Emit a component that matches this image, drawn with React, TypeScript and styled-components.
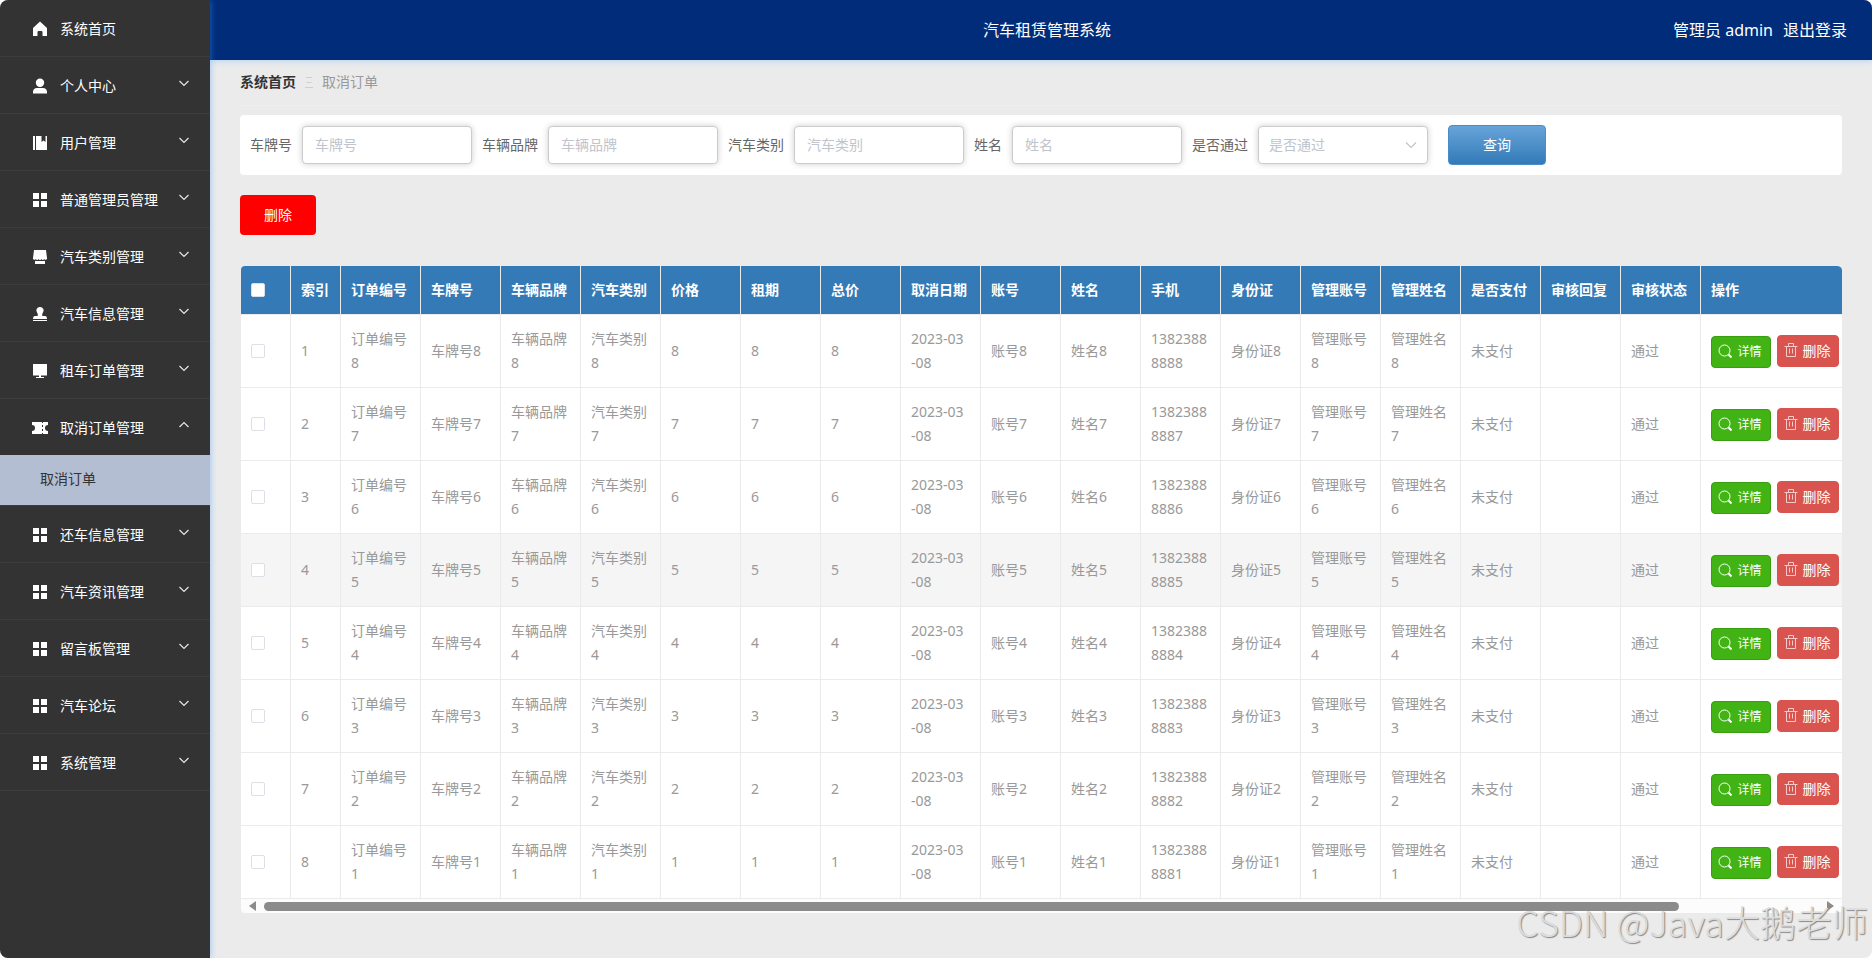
import React from 'react';
import styled, { createGlobalStyle } from 'styled-components';

const GlobalStyle = createGlobalStyle`
  * { box-sizing: border-box; }
  body {
    margin: 0;
    background: #fff;
    font-family: "Noto Sans", "Noto Sans CJK SC", sans-serif;
    font-size: 14px;
    line-height: 24px;
    color: #666;
  }
  button, input, select { font-family: inherit; }
`;

const Shell = styled.div`
  position: relative;
  display: flex;
  min-height: 100vh;
  background: #ebebeb;
  border-radius: 8px;
  overflow: hidden;
`;

const Sidebar = styled.nav`
  position: relative;
  z-index: 1;
  flex: 0 0 210px;
  background: #333;
  box-shadow: 1px 0 6px rgba(64, 158, 255, 0.4);
`;

const Menu = styled.ul`
  margin: 0;
  padding: 0;
  list-style: none;
`;

const MenuItem = styled.li`
  border-bottom: 1px solid #3c3c3c;
`;

const MenuButton = styled.button`
  display: flex;
  align-items: center;
  gap: 10px;
  width: 100%;
  height: 56px;
  padding: 2px 20px 0 30px;
  border: 0;
  background: none;
  color: #fff;
  font-size: 14px;
  text-align: left;
`;

const MenuText = styled.span`
  flex: 1;
  padding-bottom: 2px;
  white-space: nowrap;
`;

const MenuIcon = styled.svg`
  width: 20px;
  height: 20px;
  fill: #fff;
`;

const Chevron = styled.svg<{ $color: string }>`
  width: 12px;
  height: 12px;
  fill: none;
  stroke: ${(p) => p.$color};
  stroke-width: 1.2;
`;

const MenuChevron = styled(Chevron)`
  margin-bottom: 6px;
`;

const SubLink = styled.a`
  display: block;
  height: 50px;
  padding-left: 40px;
  background: #b3bed3;
  color: #333;
  line-height: 48px;
  text-decoration: none;
`;

const Main = styled.div`
  flex: 1;
  min-width: 0;
`;

const Header = styled.header`
  display: grid;
  grid-template-columns: 1fr auto 1fr;
  align-items: center;
  height: 60px;
  padding: 0 25px 0 37px;
  background: #002c7a;
  box-shadow: 0 1px 6px rgba(64, 158, 255, 0.3);
  color: #fff;
  font-size: 16px;
`;

const Title = styled.h1`
  grid-column: 2;
  margin: 0;
  font-size: 16px;
  font-weight: 400;
`;

const Account = styled.div`
  display: flex;
  justify-content: flex-end;
  gap: 10px;
`;

const LogoutLink = styled.a`
  color: #fff;
  text-decoration: none;
`;

const Content = styled.main`
  padding: 0 30px;
`;

const Breadcrumb = styled.div`
  display: flex;
  align-items: center;
  gap: 9px;
  height: 46px;
  margin-bottom: 9px;
  padding-bottom: 2px;
  border-bottom: 1px solid #eee;
  color: #999;
`;

const HomeLink = styled.a`
  color: #333;
  font-weight: 700;
  text-decoration: none;
`;

const Separator = styled.svg`
  width: 8px;
  height: 12px;
  stroke: #ccced4;
`;

const SearchBar = styled.form`
  display: flex;
  align-items: center;
  gap: 10px;
  height: 60px;
  padding: 0 10px;
  border-radius: 4px;
  background: #fff;
`;

const SearchLabel = styled.label`
  white-space: nowrap;
`;

const TextField = styled.input`
  width: 170px;
  height: 38px;
  padding: 0 12px 2px;
  border: 1px solid #ccc;
  border-radius: 4px;
  background: #fff;
  box-shadow: 0 0 6px rgba(0, 0, 0, 0.2);
  font-size: 14px;
  &::placeholder { color: #c0c4cc; }
`;

const SelectWrap = styled.div`
  display: grid;
  grid-template-columns: 1fr 12px;
  align-items: center;
  width: 170px;
  height: 38px;
  padding: 0 10px;
  border: 1px solid #ccc;
  border-radius: 4px;
  background: #fff;
  box-shadow: 0 0 6px rgba(0, 0, 0, 0.2);
`;

const SelectField = styled.select`
  appearance: none;
  grid-column: 1;
  height: 36px;
  padding: 0 0 2px;
  border: 0;
  background: none;
  color: #c0c4cc;
  font-size: 14px;
`;

const QueryButton = styled.button`
  width: 98px;
  height: 40px;
  margin-left: 10px;
  padding: 0 0 2px;
  border: 1px solid #4a8cc9;
  border-radius: 4px;
  background: linear-gradient(#67a4da, #337ab7);
  color: #fff;
  font-size: 14px;
`;

const BatchDelete = styled.button`
  display: block;
  width: 76px;
  height: 40px;
  margin: 20px 0 30px;
  padding: 0 0 2px;
  border: 0;
  border-radius: 4px;
  background: #f00;
  color: #fff;
  font-size: 14px;
`;

const TableBox = styled.section`
  border: solid #ebebeb;
  border-width: 1px 0 0 1px;
  border-radius: 5px;
  background: #fff;
  overflow: hidden;
`;

const TableView = styled.div`
  overflow: hidden;
`;

const Table = styled.table`
  width: 1760px;
  table-layout: fixed;
  border-collapse: separate;
  border-spacing: 0;
  color: #999;
`;

const HeadCell = styled.th`
  height: 49px;
  padding: 0 10px;
  border-right: 1px solid #ebebeb;
  border-bottom: 1px solid #ebebeb;
  background: #337ab7;
  color: #fff;
  font-weight: 700;
  text-align: left;
  white-space: nowrap;
`;

const Row = styled.tr<{ $active: boolean }>`
  background: ${(p) => (p.$active ? '#f5f5f5' : '#fff')};
`;

const Cell = styled.td`
  height: 73px;
  padding: 0 10px;
  border-right: 1px solid #ebebeb;
  border-bottom: 1px solid #ebebeb;
  word-break: break-all;
  white-space: pre-line;
`;

const Tick = styled.input`
  appearance: none;
  display: block;
  width: 14px;
  height: 14px;
  margin: 0;
  border: 1px solid #dcdfe6;
  border-radius: 2px;
  background: #fff;
`;

const Actions = styled.div`
  display: flex;
  align-items: flex-start;
  gap: 6px;
`;

const ActionButton = styled.button<{ $danger?: boolean }>`
  display: flex;
  align-items: center;
  justify-content: center;
  gap: 5px;
  width: ${(p) => (p.$danger ? 62 : 60)}px;
  height: 32px;
  margin: ${(p) => (p.$danger ? 0 : 1)}px 0 0;
  padding: 0 2px 1px 0;
  border: 1px solid ${(p) => (p.$danger ? '#d9534f' : '#379f10')};
  border-radius: 4px;
  background: ${(p) => (p.$danger ? '#d9534f' : '#41b314')};
  color: #fff;
  font-size: ${(p) => (p.$danger ? 14 : 12)}px;
`;

const ActionIcon = styled.svg`
  width: 14px;
  height: 14px;
  fill: none;
  stroke: #fff;
`;

const ScrollBar = styled.div`
  display: flex;
  align-items: center;
  gap: 8px;
  height: 14px;
  padding: 0 8px;
  background: #fcfcfc;
`;

const ScrollArrow = styled.svg`
  width: 7px;
  height: 10px;
  fill: #8b8b8b;
`;

const ScrollTrack = styled.div`
  flex: 1;
`;

const ScrollThumb = styled.div`
  width: 91%;
  height: 9px;
  border-radius: 5px;
  background: #8b8b8b;
`;

const Watermark = styled.div`
  position: absolute;
  right: 4px;
  bottom: 13px;
  z-index: 2;
  color: #dcdcdc;
  font-family: "Noto Sans CJK SC", sans-serif;
  font-size: 36px;
  font-weight: 300;
  line-height: 48px;
  white-space: nowrap;
  text-shadow: 1px 1px 1px #888;
  pointer-events: none;
`;

const icons: Record<string, React.ReactNode> = {
  home: <path d="M3 9 10 2.500 17 9v8h-4.500v-4a1 1 0 0 0-1-1h-3a1 1 0 0 0-1 1v4H3z" />,
  user: <path d="M10 2.500a4.200 4.200 0 1 1 0 8.400 4.200 4.200 0 0 1 0-8.400zM3 17.500V15.500A4 4 0 0 1 7 12h6a4 4 0 0 1 4 3.500v2z" />,
  book: <path d="M3 3h2v14H3zM6 3h5.500v6l2-1.500 2 1.500V3H17v14H6z" />,
  grid: <path d="M3 3h6v6H3zM11 3h6v6h-6zM3 11h6v6H3zM11 11h6v6h-6z" />,
  shop: <path d="M4 3h12l1 8a1.500 1.500 0 0 1-2.800 1 1.500 1.500 0 0 1-2.800 0 1.500 1.500 0 0 1-2.800 0 1.500 1.500 0 0 1-2.800 0A1.500 1.500 0 0 1 3 11zM5 14h10v3H5z" />,
  stamp: <path d="M10 3a3.500 3.500 0 0 1 3 5.500c-.8 1.200-1 2-.6 3.500H15q2 0 2 3H3q0-3 2-3h2.600c.4-1.500.2-2.300-.6-3.500A3.500 3.500 0 0 1 10 3zM3 16h14v1H3z" />,
  screen: <path d="M3 3h14v11.500H3zM9 14.500h2V16h3v1H6v-1h3z" />,
  ticket: <path d="M2 4h10v1h1V4h5v3a3 3 0 0 0 0 6v3h-5v-1h-1v1H2v-3a3 3 0 0 0 0-6zM12 7v2h1V7zM12 11v2h1v-2z" fillRule="evenodd" />,
};

const menu = [
  { text: '系统首页', icon: 'home' },
  { text: '个人中心', icon: 'user' },
  { text: '用户管理', icon: 'book' },
  { text: '普通管理员管理', icon: 'grid' },
  { text: '汽车类别管理', icon: 'shop' },
  { text: '汽车信息管理', icon: 'stamp' },
  { text: '租车订单管理', icon: 'screen' },
  { text: '取消订单管理', icon: 'ticket', child: '取消订单' },
  { text: '还车信息管理', icon: 'grid' },
  { text: '汽车资讯管理', icon: 'grid' },
  { text: '留言板管理', icon: 'grid' },
  { text: '汽车论坛', icon: 'grid' },
  { text: '系统管理', icon: 'grid' },
];

const fields = ['车牌号', '车辆品牌', '汽车类别', '姓名'];

const columns = [
  '订单编号', '车牌号', '车辆品牌', '汽车类别', '价格', '租期', '总价', '取消日期', '账号',
  '姓名', '手机', '身份证', '管理账号', '管理姓名', '是否支付', '审核回复', '审核状态',
];

const orders = [8, 7, 6, 5, 4, 3, 2, 1].map((n) => [
  `订单编号${n}`, `车牌号${n}`, `车辆品牌${n}`, `汽车类别${n}`, `${n}`, `${n}`, `${n}`,
  '2023-03\n-08', `账号${n}`, `姓名${n}`, `1382388888${n}`, `身份证${n}`,
  `管理账号${n}`, `管理姓名${n}`, '未支付', '', '通过',
]);

export default function App() {
  return (
    <>
      <GlobalStyle />
      <Shell>
        <Sidebar>
          <Menu>
            {menu.map((item, i) => (
              <MenuItem key={item.text}>
                <MenuButton type="button">
                  <MenuIcon viewBox="0 0 20 20">{icons[item.icon]}</MenuIcon>
                  <MenuText>{item.text}</MenuText>
                  {i > 0 && (
                    <MenuChevron viewBox="0 0 12 12" $color="#e6e6e6">
                      <path d={item.child ? 'M1.500 8 6 3.500 10.500 8' : 'M1.500 4 6 8.500 10.500 4'} />
                    </MenuChevron>
                  )}
                </MenuButton>
                {item.child && <SubLink href="#cancel">{item.child}</SubLink>}
              </MenuItem>
            ))}
          </Menu>
        </Sidebar>
        <Main>
          <Header>
            <Title>汽车租赁管理系统</Title>
            <Account>
              <span>管理员 admin</span>
              <LogoutLink href="#logout">退出登录</LogoutLink>
            </Account>
          </Header>
          <Content>
            <Breadcrumb>
              <HomeLink href="#home">系统首页</HomeLink>
              <Separator viewBox="0 0 8 12"><path d="M1 1.500h6M1.500 6.500h5M0 11.500h8" /></Separator>
              <span>取消订单</span>
            </Breadcrumb>
            <SearchBar>
              {fields.map((name) => (
                <React.Fragment key={name}>
                  <SearchLabel htmlFor={name}>{name}</SearchLabel>
                  <TextField id={name} placeholder={name} />
                </React.Fragment>
              ))}
              <SearchLabel htmlFor="passed">是否通过</SearchLabel>
              <SelectWrap>
                <SelectField id="passed" defaultValue="">
                  <option value="">是否通过</option>
                </SelectField>
                <Chevron viewBox="0 0 12 12" $color="#c0c4cc"><path d="M1 3.500 6 8.500 11 3.500" /></Chevron>
              </SelectWrap>
              <QueryButton type="button">查询</QueryButton>
            </SearchBar>
            <BatchDelete type="button">删除</BatchDelete>
            <TableBox>
              <TableView>
                <Table>
                  <colgroup>
                    <col width="50" />
                    <col width="50" />
                    {columns.map((c) => <col key={c} width="80" />)}
                    <col width="300" />
                  </colgroup>
                  <thead>
                    <tr>
                      <HeadCell><Tick type="checkbox" aria-label="全选" /></HeadCell>
                      <HeadCell>索引</HeadCell>
                      {columns.map((c) => <HeadCell key={c}>{c}</HeadCell>)}
                      <HeadCell>操作</HeadCell>
                    </tr>
                  </thead>
                  <tbody>
                    {orders.map((order, i) => (
                      <Row key={i} $active={i === 3}>
                        <Cell><Tick type="checkbox" aria-label={`选择第${i + 1}行`} /></Cell>
                        <Cell>{i + 1}</Cell>
                        {order.map((value, k) => <Cell key={k}>{value}</Cell>)}
                        <Cell>
                          <Actions>
                            <ActionButton type="button">
                              <ActionIcon viewBox="0 0 14 14">
                                <circle cx="6.500" cy="6.500" r="5.500" />
                                <path d="m10.500 10.500 3 3" strokeWidth="2" />
                              </ActionIcon>
                              详情
                            </ActionButton>
                            <ActionButton type="button" $danger>
                              <ActionIcon viewBox="0 0 14 14" opacity="0.7">
                                <path d="M.500 3.500h13M4.500 3V.500h5V3M2.500 3.500v10h9v-10M5.500 5.500v5M8.500 5.500v5" />
                              </ActionIcon>
                              删除
                            </ActionButton>
                          </Actions>
                        </Cell>
                      </Row>
                    ))}
                  </tbody>
                </Table>
              </TableView>
              <ScrollBar>
                <ScrollArrow viewBox="0 0 7 10"><path d="M0 5 7 0v10z" /></ScrollArrow>
                <ScrollTrack><ScrollThumb /></ScrollTrack>
                <ScrollArrow viewBox="0 0 7 10"><path d="M7 5 0 0v10z" /></ScrollArrow>
              </ScrollBar>
            </TableBox>
          </Content>
        </Main>
        <Watermark>CSDN @Java大鹅老师</Watermark>
      </Shell>
    </>
  );
}
